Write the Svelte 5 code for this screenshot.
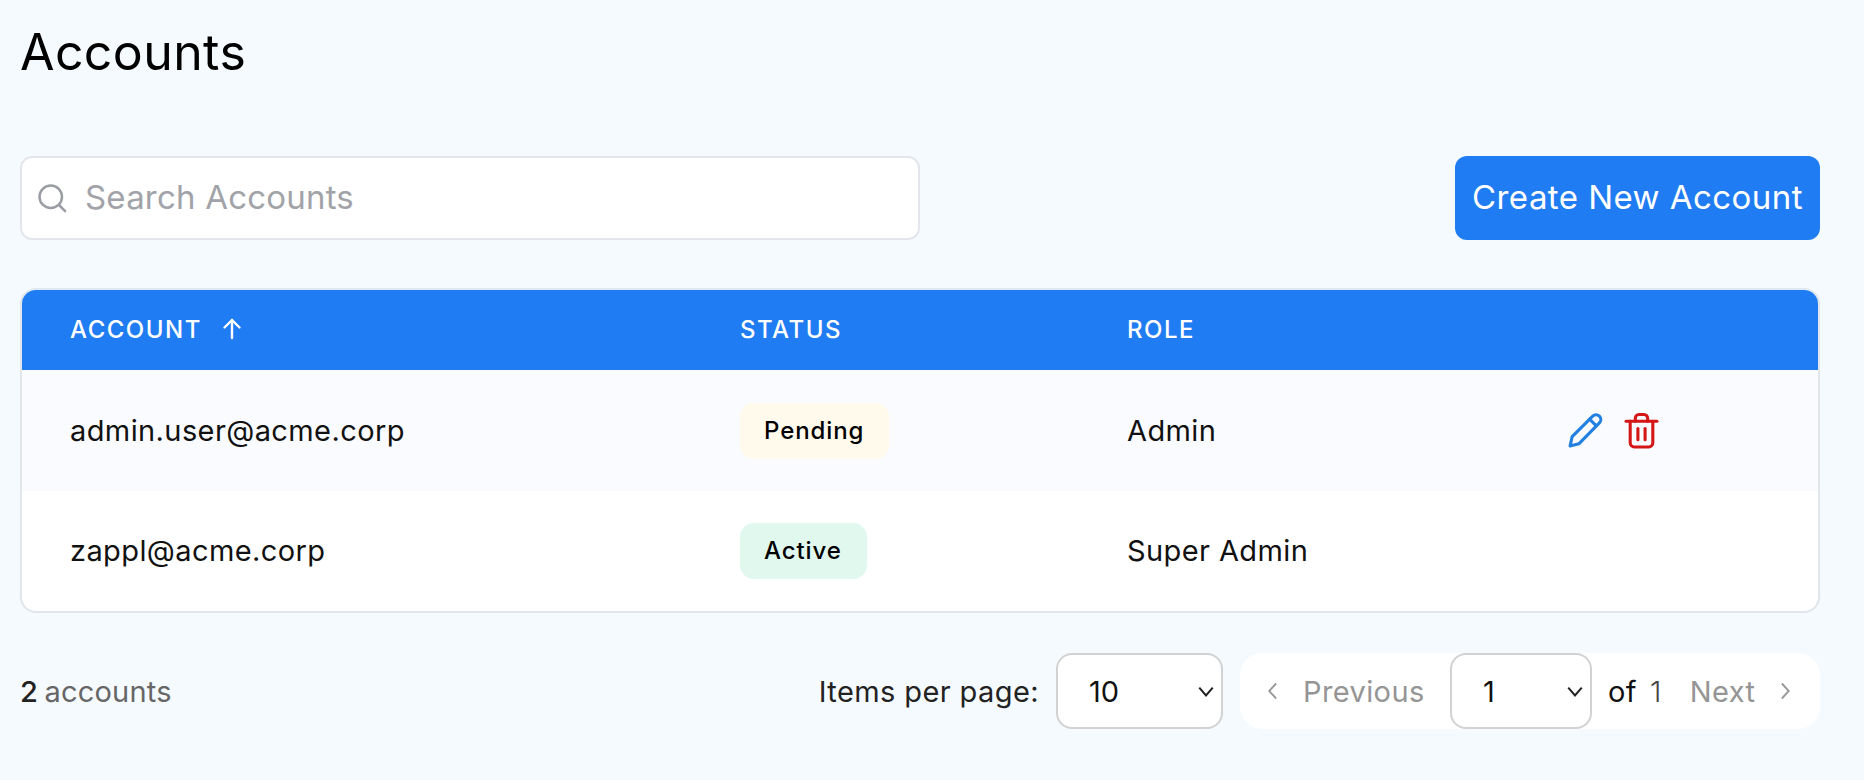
<script lang="ts">
  const accounts = [
    { email: 'admin.user@acme.corp', status: 'Pending', role: 'Admin', editable: true },
    { email: 'zappl@acme.corp', status: 'Active', role: 'Super Admin', editable: false }
  ];
</script>

<div class="page">
  <h1>Accounts</h1>

  <div class="toolbar">
    <label class="search">
      <svg viewBox="0 0 24 24" aria-hidden="true"><circle cx="11" cy="11" r="9"/><path d="M18 18l4.5 4.5"/></svg>
      <input type="text" placeholder="Search Accounts" />
    </label>
    <button class="create">Create New Account</button>
  </div>

  <div class="table">
    <div class="row head">
      <div class="sort">
        ACCOUNT
        <svg viewBox="0 0 24 24" aria-hidden="true"><path d="M12 21V3"/><path d="M4.5 10.5L12 3l7.5 7.5"/></svg>
      </div>
      <div>STATUS</div>
      <div>ROLE</div>
      <div></div>
    </div>
    {#each accounts as account, i (account.email)}
      <div class="row body" class:shaded={i === 0}>
        <div>{account.email}</div>
        <div class="status"><span class="badge {account.status.toLowerCase()}">{account.status}</span></div>
        <div>{account.role}</div>
        <div class="actions">
          {#if account.editable}
            <button class="edit" aria-label="Edit">
              <svg viewBox="0 0 36 36"><path d="M4 33l2-9L26 4a4.5 4.5 0 0 1 6.5 6.5L12.5 31z"/><path d="M23 7l6.5 6.5"/></svg>
            </button>
            <button class="delete" aria-label="Delete">
              <svg viewBox="0 0 36 36"><path d="M3 9h30"/><path d="M12 9V6a3.5 3.5 0 0 1 3.5-3.5h5A3.5 3.5 0 0 1 24 6v3"/><path d="M7 9v21a4 4 0 0 0 4 4h14a4 4 0 0 0 4-4V9"/><path d="M14.5 16v11"/><path d="M21.5 16v11"/></svg>
            </button>
          {/if}
        </div>
      </div>
    {/each}
  </div>

  <div class="footer">
    <div class="count"><strong>2</strong> accounts</div>
    <div class="controls">
      <span class="per-page">Items per page:</span>
      <div class="select per">
        <select><option>10</option><option>25</option></select>
        <svg viewBox="0 0 16 16" aria-hidden="true"><path d="M2 5l6 7 6-7"/></svg>
      </div>
      <div class="pager">
        <svg class="chev" viewBox="0 0 16 16" aria-hidden="true"><path d="M10.5 2L5 8l5.5 6"/></svg>
        <span class="muted prev">Previous</span>
        <div class="select page-no">
          <select><option>1</option></select>
          <svg viewBox="0 0 16 16" aria-hidden="true"><path d="M2 5l6 7 6-7"/></svg>
        </div>
        <span class="of">of</span>
        <span class="total">1</span>
        <span class="muted next">Next</span>
        <svg class="chev" viewBox="0 0 16 16" aria-hidden="true"><path d="M5.5 2L11 8l-5.5 6"/></svg>
      </div>
    </div>
  </div>
</div>

<style>
  :global(body) {
    margin: 0;
    background: #f5faff;
  }

  .page {
    height: 780px;
    box-sizing: border-box;
    padding: 20px 44px 0 20px;
    font-family: Inter, "Liberation Sans", sans-serif;
    color: #111;
    overflow: hidden;
  }

  h1 {
    margin: 0;
    height: 64px;
    font-size: 50px;
    line-height: 64px;
    font-weight: 400;
    color: #000;
    letter-spacing: 0.4px;
  }

  .toolbar {
    display: flex;
    justify-content: space-between;
    margin-top: 72px;
    height: 84px;
  }

  .search {
    width: 900px;
    box-sizing: border-box;
    display: flex;
    align-items: center;
    gap: 18px;
    padding-left: 15px;
    background: #fff;
    border: 2px solid #e3e7ec;
    border-radius: 12px;
  }

  .search svg {
    width: 30px;
    height: 30px;
    fill: none;
    stroke: #9a9da3;
    stroke-width: 2;
    stroke-linecap: round;
    flex-shrink: 0;
  }

  .search input {
    flex: 1;
    border: 0;
    outline: 0;
    background: none;
    padding: 0 0 2px;
    font: inherit;
    font-size: 33px;
    letter-spacing: 0.2px;
    color: #111;
  }

  .search input::placeholder {
    color: #a1a3a8;
    opacity: 1;
  }

  .create {
    width: 365px;
    border: 0;
    border-radius: 12px;
    background: #1f7cf2;
    color: #fff;
    font: inherit;
    font-size: 33px;
    letter-spacing: 0.45px;
    padding: 0 0 2px;
  }

  .table {
    margin-top: 48px;
    background: #fff;
    border: 2px solid #e1e6ec;
    border-top-color: #dfe8f2;
    border-radius: 16px;
    overflow: hidden;
  }

  .row {
    display: grid;
    grid-template-columns: 670px 387px 439px 1fr;
    align-items: center;
    padding-left: 48px;
  }

  .head {
    height: 80px;
    box-sizing: border-box;
    padding-bottom: 2px;
    background: #1f7cf2;
    color: #fff;
    font-size: 24px;
    font-weight: 500;
    letter-spacing: 1.5px;
  }

  .sort {
    display: flex;
    align-items: center;
    gap: 18px;
  }

  .sort svg {
    width: 24px;
    height: 24px;
    fill: none;
    stroke: #fff;
    stroke-width: 2.4;
    stroke-linecap: round;
    stroke-linejoin: round;
  }

  .body {
    height: 120.5px;
    font-size: 29px;
    letter-spacing: 0.4px;
  }

  .shaded {
    background: #f9fbfe;
  }

  .status {
    display: flex;
  }

  .badge {
    height: 56px;
    margin-top: 1px;
    line-height: 56px;
    padding: 0 25px 0 24px;
    border-radius: 14px;
    font-size: 24px;
    font-weight: 500;
    letter-spacing: 0.9px;
    color: #000;
  }

  .pending {
    background: #fffaeb;
  }

  .active {
    background: #e0f8ee;
  }

  .actions {
    display: flex;
    align-items: center;
    gap: 20px;
  }

  .actions button {
    width: 37px;
    height: 37px;
    padding: 0;
    border: 0;
    background: none;
  }

  .actions svg {
    display: block;
    width: 37px;
    height: 37px;
    fill: none;
    stroke-width: 3;
    stroke-linecap: round;
    stroke-linejoin: round;
  }

  .edit svg {
    stroke: #2280e0;
  }

  .delete svg {
    stroke: #d41616;
  }

  .footer {
    display: flex;
    justify-content: space-between;
    align-items: center;
    margin-top: 40px;
    height: 76px;
    font-size: 29px;
    letter-spacing: 0.4px;
  }

  .count {
    color: #666;
    letter-spacing: 0.2px;
    word-spacing: -2px;
  }

  .count strong {
    color: #222;
    font-weight: 500;
  }

  .controls {
    display: flex;
    align-items: center;
    gap: 17px;
  }

  .per-page {
    color: #222;
  }

  .pager {
    display: flex;
    align-items: center;
    width: 580px;
    height: 76px;
    box-sizing: border-box;
    padding-left: 23px;
    background: #fff;
    border-radius: 22px;
  }

  .chev {
    width: 20px;
    height: 20px;
    fill: none;
    stroke: #999;
    stroke-width: 1.5;
    flex-shrink: 0;
  }

  .muted {
    color: #959595;
  }

  .prev {
    margin-left: 20px;
    width: 147px;
    white-space: nowrap;
  }

  .of {
    margin-left: 16px;
  }

  .total {
    margin-left: 13px;
    font-weight: 300;
    color: #444;
  }

  .next {
    margin-left: 28px;
    margin-right: 20px;
  }

  .select {
    position: relative;
    flex-shrink: 0;
  }

  .select select {
    appearance: none;
    display: block;
    width: 100%;
    height: 76px;
    box-sizing: border-box;
    padding: 0 0 0 31px;
    background: #fff;
    border: 2px solid #d2d2d2;
    border-radius: 16px;
    font: inherit;
    color: #111;
  }

  .select svg {
    position: absolute;
    right: 8px;
    top: 29px;
    width: 18px;
    height: 18px;
    fill: none;
    stroke: #222;
    stroke-width: 1.8;
    pointer-events: none;
  }

  .per {
    width: 167px;
  }

  .page-no {
    width: 142px;
  }
</style>
